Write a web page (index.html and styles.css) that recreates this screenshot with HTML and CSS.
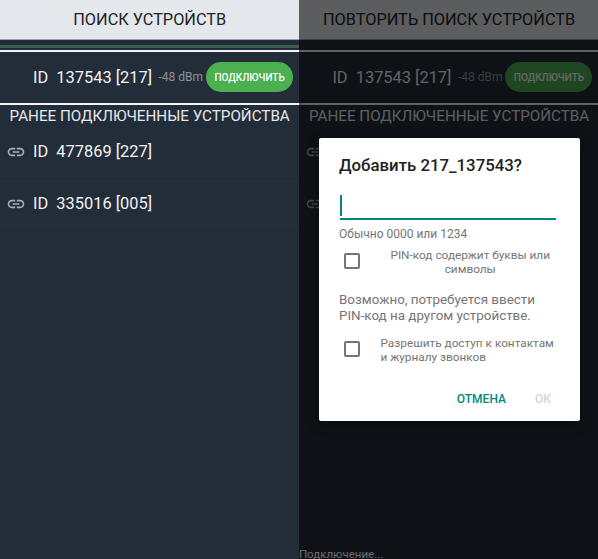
FILE: index.html
```html
<!DOCTYPE html>
<html lang="ru">
<head>
    <meta charset="UTF-8">
    <meta name="viewport" content="width=device-width, initial-scale=1.0">
    <title>Поиск устройств</title>
    <link rel="stylesheet" href="styles.css">
</head>
<body>
    <div class="screens">
        <div class="screen">
            <div class="top-button">ПОИСК УСТРОЙСТВ</div>
            <div class="progress-gap"><div class="progress-line"></div></div>
            <div class="found-row">
                <span class="device-id">ID&nbsp; 137543 [217]</span>
                <span class="rssi">-48 dBm</span>
                <button class="connect-btn">ПОДКЛЮЧИТЬ</button>
            </div>
            <div class="section-title">РАНЕЕ ПОДКЛЮЧЕННЫЕ УСТРОЙСТВА</div>
            <div class="paired-row">
                <svg class="link-icon" viewBox="0 0 24 24"><path d="M3.9 12c0-1.71 1.39-3.1 3.1-3.1h4V7H7c-2.76 0-5 2.24-5 5s2.24 5 5 5h4v-1.9H7c-1.71 0-3.1-1.39-3.1-3.1zM8 13h8v-2H8v2zm9-6h-4v1.9h4c1.71 0 3.1 1.39 3.1 3.1s-1.39 3.1-3.1 3.1h-4V17h4c2.76 0 5-2.24 5-5s-2.24-5-5-5z"/></svg>
                <span class="device-id">ID&nbsp; 477869 [227]</span>
            </div>
            <div class="paired-row">
                <svg class="link-icon" viewBox="0 0 24 24"><path d="M3.9 12c0-1.71 1.39-3.1 3.1-3.1h4V7H7c-2.76 0-5 2.24-5 5s2.24 5 5 5h4v-1.9H7c-1.71 0-3.1-1.39-3.1-3.1zM8 13h8v-2H8v2zm9-6h-4v1.9h4c1.71 0 3.1 1.39 3.1 3.1s-1.39 3.1-3.1 3.1h-4V17h4c2.76 0 5-2.24 5-5s-2.24-5-5-5z"/></svg>
                <span class="device-id">ID&nbsp; 335016 [005]</span>
            </div>
        </div>

        <div class="screen">
            <div class="top-button">ПОВТОРИТЬ ПОИСК УСТРОЙСТВ</div>
            <div class="progress-gap"></div>
            <div class="found-row">
                <span class="device-id">ID&nbsp; 137543 [217]</span>
                <span class="rssi">-48 dBm</span>
                <button class="connect-btn">ПОДКЛЮЧИТЬ</button>
            </div>
            <div class="section-title">РАНЕЕ ПОДКЛЮЧЕННЫЕ УСТРОЙСТВА</div>
            <!-- the dialog covers the text of these two rows, only the icons show -->
            <div class="paired-row">
                <svg class="link-icon" viewBox="0 0 24 24"><path d="M3.9 12c0-1.71 1.39-3.1 3.1-3.1h4V7H7c-2.76 0-5 2.24-5 5s2.24 5 5 5h4v-1.9H7c-1.71 0-3.1-1.39-3.1-3.1zM8 13h8v-2H8v2zm9-6h-4v1.9h4c1.71 0 3.1 1.39 3.1 3.1s-1.39 3.1-3.1 3.1h-4V17h4c2.76 0 5-2.24 5-5s-2.24-5-5-5z"/></svg>
            </div>
            <div class="paired-row">
                <svg class="link-icon" viewBox="0 0 24 24"><path d="M3.9 12c0-1.71 1.39-3.1 3.1-3.1h4V7H7c-2.76 0-5 2.24-5 5s2.24 5 5 5h4v-1.9H7c-1.71 0-3.1-1.39-3.1-3.1zM8 13h8v-2H8v2zm9-6h-4v1.9h4c1.71 0 3.1 1.39 3.1 3.1s-1.39 3.1-3.1 3.1h-4V17h4c2.76 0 5-2.24 5-5s-2.24-5-5-5z"/></svg>
            </div>

            <div class="scrim">
                <div class="dialog">
                    <h2 class="dialog-title">Добавить 217_137543?</h2>
                    <div class="pin-input"><span class="caret"></span></div>
                    <p class="hint">Обычно 0000 или 1234</p>
                    <label class="check-row">
                        <span class="checkbox"></span>
                        <span class="check-text centered">PIN-код содержит буквы или символы</span>
                    </label>
                    <p class="dialog-note">Возможно, потребуется ввести PIN-код на другом устройстве.</p>
                    <label class="check-row second">
                        <span class="checkbox"></span>
                        <span class="check-text">Разрешить доступ к контактам и журналу звонков</span>
                    </label>
                    <div class="dialog-actions">
                        <span class="action">ОТМЕНА</span>
                        <span class="action disabled">ОК</span>
                    </div>
                </div>
                <div class="toast">Подключение...</div>
            </div>
        </div>
    </div>
</body>
</html>
```

FILE: styles.css
```css
* {
    margin: 0;
    padding: 0;
    box-sizing: border-box;
}

html, body {
    height: 100%;
    overflow: hidden;
}

body {
    font-family: Roboto, 'Liberation Sans', sans-serif;
    background-color: #232d39;
}

.screens {
    display: flex;
    height: 559px;
}

.screen {
    position: relative;
    width: 299.4px;
    flex: none;
    background-color: #232d39;
    color: #fff;
}

.top-button {
    height: 40px;
    display: flex;
    align-items: center;
    justify-content: center;
    background-color: #e4e8ec;
    border-bottom: 1px solid #9aa3ad;
    color: #222;
    font-size: 16.3px;
}

.progress-gap {
    height: 12px;
    padding-top: 5px;
    border-bottom: 2px solid #f2f4f5;
}

.progress-line {
    height: 3px;
    background-color: #3e5c48;
}

.found-row {
    height: 53px;
    display: flex;
    align-items: center;
    padding: 0 6px 1px 33px;
    border-bottom: 2px solid #f2f4f5;
}

.device-id {
    font-size: 16.4px;
    color: #f1f3f5;
}

.rssi {
    margin-left: 6.5px;
    font-size: 12px;
    color: #8e949c;
    white-space: nowrap;
}

.connect-btn {
    margin-left: 3px;
    width: 87px;
    height: 30px;
    flex: none;
    border: none;
    border-radius: 15px;
    background-color: #4caf50;
    color: #fff;
    font-family: inherit;
    font-size: 10px;
    font-weight: 500;
}

.section-title {
    height: 22px;
    display: flex;
    align-items: center;
    justify-content: center;
    font-size: 15.2px;
    color: #e6e9ec;
    white-space: nowrap;
}

.paired-row {
    height: 52px;
    display: flex;
    align-items: center;
    gap: 7px;
    padding: 0 0 2px 6px;
    border-bottom: 1px solid #202936;
}

.link-icon {
    width: 20px;
    height: 20px;
    fill: #a9adb2;
}

.scrim {
    position: absolute;
    top: 0;
    left: 0;
    right: 0;
    bottom: 0;
    background-color: rgba(0, 0, 0, 0.6);
}

.dialog {
    position: absolute;
    top: 138px;
    left: 19.6px;
    width: 261px;
    height: 283px;
    padding: 15px 24px 0 20px;
    background-color: #fff;
    border-radius: 2px;
    box-shadow: 0 4px 12px rgba(0, 0, 0, 0.4);
}

.dialog-title {
    font-size: 16.8px;
    font-weight: 500;
    line-height: 24px;
    color: #222;
}

.pin-input {
    margin: 18px 0 0 1px;
    height: 25px;
    border-bottom: 2px solid #00897b;
}

.caret {
    display: block;
    width: 2px;
    height: 21px;
    background-color: #00897b;
}

.hint {
    margin-top: 7px;
    font-size: 12px;
    line-height: 14px;
    color: #757575;
}

.check-row {
    display: flex;
    align-items: center;
    margin-top: 5px;
    margin-left: 5.5px;
}

.checkbox {
    width: 16px;
    height: 16px;
    flex: none;
    border: 2px solid #757575;
    border-radius: 2px;
}

.check-text {
    margin-left: 20px;
    padding-top: 2px;
    font-size: 11.8px;
    line-height: 14px;
    color: #757575;
}

.check-text.centered {
    margin-left: 24px;
    text-align: center;
}

.dialog-note {
    margin-top: 16px;
    font-size: 13.4px;
    line-height: 16px;
    color: #757575;
}

.check-row.second {
    margin-top: 10px;
}

.dialog-actions {
    display: flex;
    justify-content: flex-end;
    gap: 29px;
    margin-top: 28px;
    margin-right: 5px;
}

.action {
    font-size: 12px;
    font-weight: 500;
    line-height: 14px;
    color: #00897b;
}

.action.disabled {
    color: #d6d6d6;
}

.toast {
    position: absolute;
    left: -0.5px;
    bottom: 0;
    font-size: 11.5px;
    line-height: 10px;
    color: #6d7176;
}
```
